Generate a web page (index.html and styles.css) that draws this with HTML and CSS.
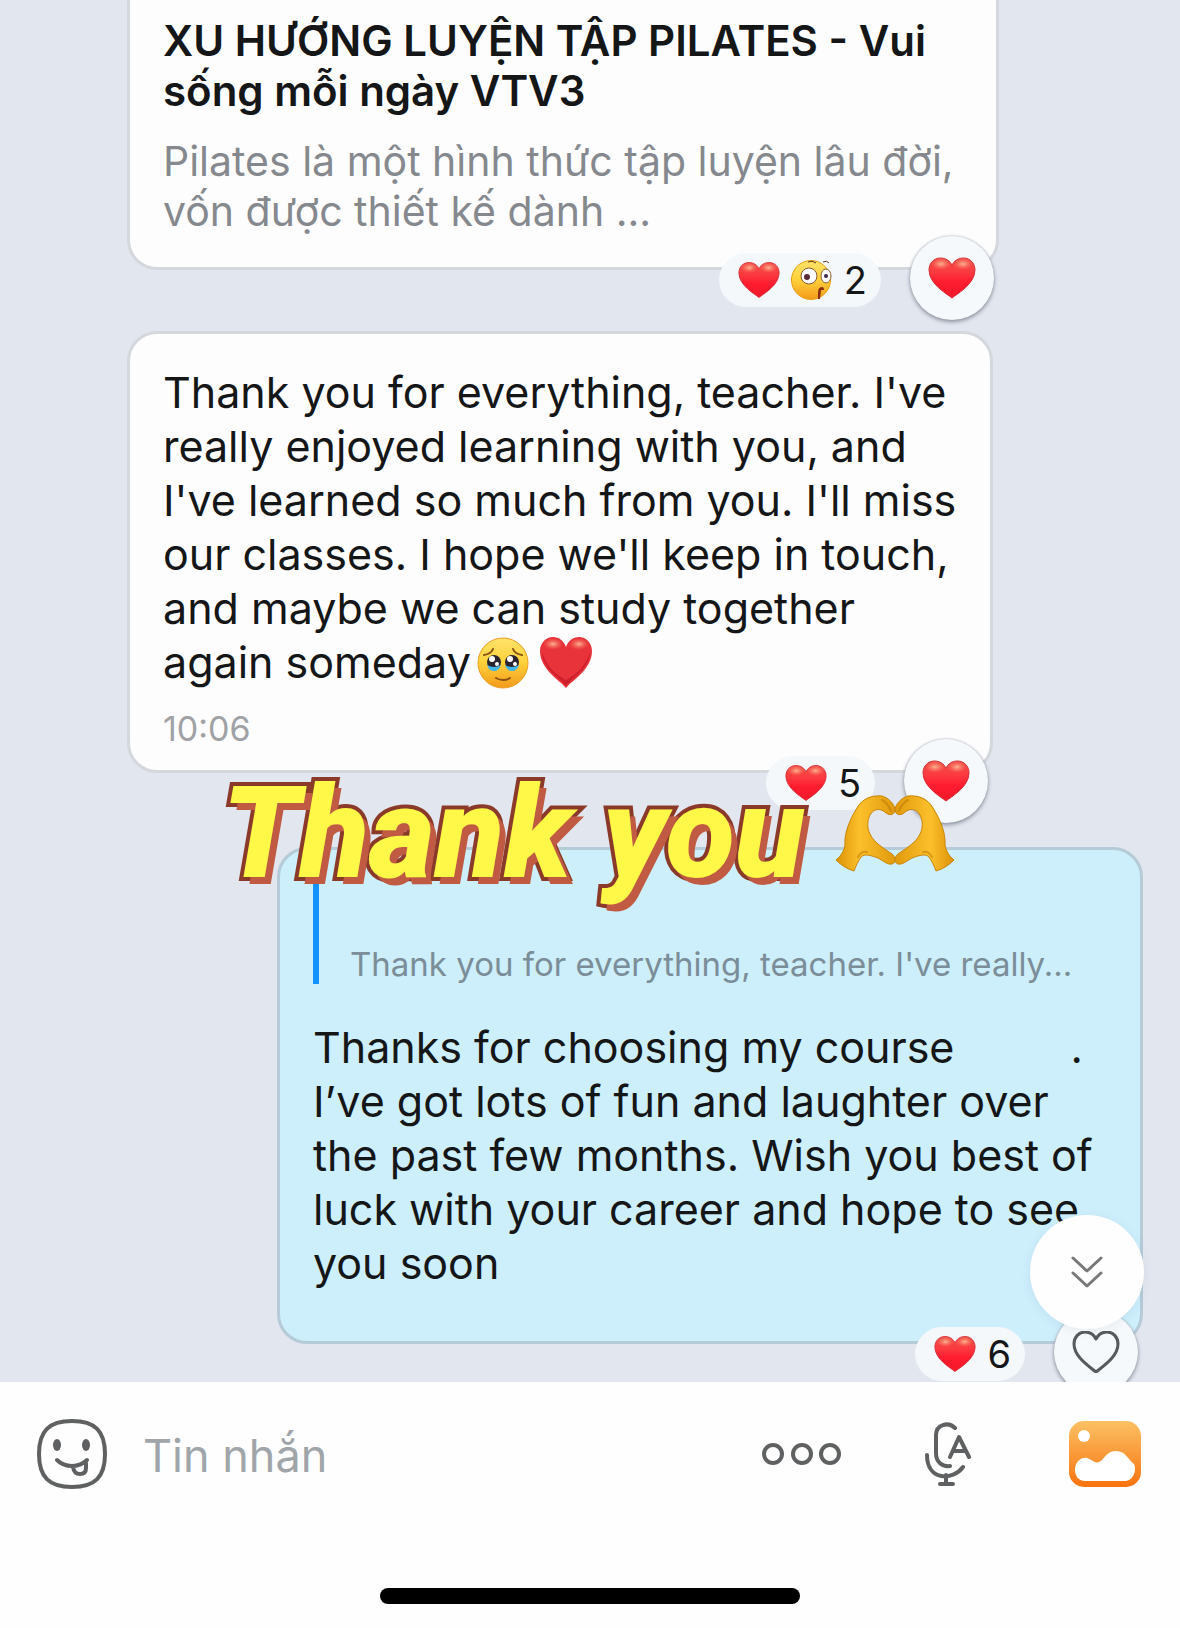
FILE: index.html
```html
<!DOCTYPE html>
<html lang="vi">
<head>
<meta charset="utf-8">
<meta name="viewport" content="width=device-width, initial-scale=1">
<title>Tin nhắn</title>
<link rel="stylesheet" href="styles.css">
</head>
<body>
<svg class="defs" width="0" height="0" aria-hidden="true">
  <defs>
    <linearGradient id="heart-fill" x1="0" y1="0" x2="0" y2="1">
      <stop offset="0" stop-color="#f0504a"/>
      <stop offset=".35" stop-color="#fb3a40"/>
      <stop offset=".6" stop-color="#ff1d30"/>
      <stop offset="1" stop-color="#f2182a"/>
    </linearGradient>
    <radialGradient id="shine"><stop offset="0" stop-color="#ffc9a0" stop-opacity=".85"/><stop offset="1" stop-color="#ff7a60" stop-opacity="0"/></radialGradient>
    <linearGradient id="face-fill" x1="0" y1="0" x2="0" y2="1">
      <stop offset="0" stop-color="#ffe36a"/><stop offset=".5" stop-color="#ffd03a"/><stop offset="1" stop-color="#f39a1c"/>
    </linearGradient>
    <linearGradient id="hand-fill" x1="0" y1="0" x2="1" y2="0">
      <stop offset="0" stop-color="#dc9206"/><stop offset=".4" stop-color="#fcc02c"/><stop offset="1" stop-color="#e09a0c"/>
    </linearGradient>
    <linearGradient id="photo-fill" x1="0" y1="0" x2="0" y2="1">
      <stop offset="0" stop-color="#fbc163"/><stop offset="1" stop-color="#f9730f"/>
    </linearGradient>
    <symbol id="heart" viewBox="0 0 48 42">
      <path d="M24 41C19 37 1 27 1 13 1 6 6 1 12.500 1 18 1 22 4 24 8 26 4 30 1 35.500 1 42 1 47 6 47 13 47 27 29 37 24 41Z" fill="url(#heart-fill)" stroke="#d9303a" stroke-width="1"/>
      <ellipse cx="13" cy="7" rx="10" ry="6" fill="url(#shine)"/>
      <ellipse cx="35" cy="7" rx="10" ry="6" fill="url(#shine)"/>
    </symbol>
    <g id="hand">
      <path d="M0 65C5 61 8 56 9 50C8 38 14 24 21 13C26 4 35 0 46 1C53 3 58 9 59 14C59 20 54 21 50 18C45 13 38 13 34 20C31 26 31 33 34 39C38 48 49 54 56 59C60 62 60 68 56 69C52 70 47 66 42 63C36 61 29 58 25 62C22 66 20 71 18 76C11 74 5 70 0 65Z" fill="url(#hand-fill)" stroke="#c98506" stroke-width="1"/>
      <path d="M46 5C50 7 53 11 55 16M31 57C27 56 24 58 22 62" fill="none" stroke="#b97404" stroke-width="2" stroke-linecap="round" opacity=".5"/>
    </g>
  </defs>
</svg>

<div class="screen">
  <main class="chat">
    <article class="bubble bubble-link">
      <h2 class="link-title">XU HƯỚNG LUYỆN TẬP PILATES - Vui<br>sống mỗi ngày VTV3</h2>
      <p class="link-text">Pilates là một hình thức tập luyện lâu đời,<br>vốn được thiết kế dành ...</p>
      <div class="reactions">
        <button class="pill" type="button">
          <svg class="mini-heart"><use href="#heart"/></svg>
          <svg class="mini-face" viewBox="0 0 42 42">
            <circle cx="20" cy="21" r="19.500" fill="url(#face-fill)" stroke="#e8a013"/>
            <circle cx="18" cy="17" r="8" fill="#fff" stroke="#8a5a32"/>
            <ellipse cx="35" cy="17" rx="5" ry="7" fill="#fff" stroke="#8a5a32"/>
            <circle cx="16" cy="18" r="3" fill="#5a2a38"/><circle cx="35" cy="17" r="2" fill="#3b2450"/>
            <path d="M17 3q4-2 8 1M32 3q4-2 6 1" fill="none" stroke="#5b3a20"/>
            <path d="M27 40V34q0-6 4-6 2 0 2 3h-3l-1 9Z" fill="#8c2a12"/>
          </svg>
          <span>2</span>
        </button>
        <button class="react" type="button" aria-label="Thả tim"><svg class="heart-icon"><use href="#heart"/></svg></button>
      </div>
    </article>

    <article class="bubble bubble-in">
      <p class="text">Thank you for everything, teacher. I've<br>really enjoyed learning with you, and<br>I've learned so much from you. I'll miss<br>our classes. I hope we'll keep in touch,<br>and maybe we can study together<br>again someday<svg class="emoji" viewBox="0 0 52 52">
          <circle cx="26" cy="26" r="25" fill="url(#face-fill)" stroke="#ef9f25"/>
          <circle cx="17" cy="25" r="7" fill="#2a2430"/><circle cx="35" cy="25" r="7" fill="#2a2430"/>
          <path d="M10 28q7 4 14 0-2 6-7 6t-7-6ZM28 28q7 4 14 0-2 6-7 6t-7-6Z" fill="#45b5ec"/>
          <circle cx="15" cy="22" r="3" fill="#fff"/><circle cx="33" cy="22" r="3" fill="#fff"/>
          <circle cx="20" cy="27" r="2" fill="#fff"/><circle cx="38" cy="27" r="2" fill="#fff"/>
          <path d="M7 18q7-1 9-6M36 12q2 5 9 6M19 41q7 4 14 0" fill="none" stroke="#8a5312" stroke-width="2" stroke-linecap="round"/>
        </svg><svg class="emoji emoji-heart" viewBox="0 0 52 52">
          <path d="M26 51C21 44 0 33 0 14 0 6 6 0 13 0 19 0 24 4 26 10 28 4 33 0 39 0 46 0 52 6 52 14 52 33 31 44 26 51Z" fill="#e8333a"/>
          <path d="M26 49C20 41 2 31 2 15 8 34 20 39 26 43 32 39 44 34 50 15 50 31 32 41 26 49Z" fill="#cf1f2c"/>
          <ellipse cx="13" cy="7" rx="10" ry="6" fill="url(#shine)"/><ellipse cx="39" cy="7" rx="10" ry="6" fill="url(#shine)"/>
        </svg></p>
      <time class="time">10:06</time>
      <div class="reactions">
        <button class="pill" type="button"><svg class="mini-heart"><use href="#heart"/></svg><span>5</span></button>
        <button class="react" type="button" aria-label="Thả tim"><svg class="heart-icon"><use href="#heart"/></svg></button>
      </div>
    </article>

    <article class="bubble bubble-out">
      <blockquote class="quote">Thank you for everything, teacher. I've really...</blockquote>
      <p class="text">Thanks for choosing my course<span class="blank"></span>.<br>I’ve got lots of fun and laughter over<br>the past few months. Wish you best of<br>luck with your career and hope to see<br>you soon</p>
      <div class="reactions">
        <button class="pill" type="button"><svg class="mini-heart"><use href="#heart"/></svg><span>6</span></button>
        <button class="react" type="button" aria-label="Thả tim">
          <svg class="heart-icon" viewBox="0 0 48 42"><path d="M24 41C18 36 2 26 2 13 2 6 7 1 13 1 18 1 22 4 24 8 26 4 30 1 35 1 41 1 46 6 46 13 46 26 30 36 24 41Z" fill="none" stroke="#57595b" stroke-width="3" stroke-linejoin="round"/></svg>
        </button>
      </div>
    </article>

    <div class="sticker">
      <span class="sticker-text">Thank you</span>
      <svg class="sticker-hands" viewBox="0 0 118 78"><use href="#hand"/><use href="#hand" transform="translate(118 0) scale(-1 1)"/></svg>
    </div>

    <button class="jump" type="button" aria-label="Xuống cuối">
      <svg width="34" height="34" viewBox="0 0 34 34" fill="none" stroke="#77787a" stroke-width="3" stroke-linecap="round" stroke-linejoin="round"><path d="M3 3l14 13L31 3M3 18l14 13 14-13"/></svg>
    </button>
  </main>

  <footer class="composer">
    <form class="bar">
      <button class="tool" type="button" aria-label="Nhãn dán">
        <svg width="70" height="70" viewBox="0 0 70 70" fill="none" stroke="#5f6061" stroke-width="4" stroke-linecap="round">
          <path d="M35 2C58 2 68 12 68 35S58 68 35 68 2 58 2 35 12 2 35 2Z"/>
          <ellipse cx="20" cy="26" rx="4" ry="6" fill="#5f6061" stroke="none"/><ellipse cx="49" cy="26" rx="4" ry="6" fill="#5f6061" stroke="none"/>
          <path d="M20 41Q26 47 35 47T50 41M36 48Q37 55 43 55T49 49V44"/>
        </svg>
      </button>
      <input class="field" type="text" aria-label="Tin nhắn" placeholder="Tin nhắn">
      <button class="tool" type="button" aria-label="Thêm">
        <svg width="80" height="22" viewBox="0 0 80 22" fill="none" stroke="#5f6061" stroke-width="4"><circle cx="11" cy="11" r="9"/><circle cx="40" cy="11" r="9"/><circle cx="68" cy="11" r="9"/></svg>
      </button>
      <button class="tool tool-mic" type="button" aria-label="Ghi âm">
        <svg width="46" height="66" viewBox="0 0 46 66" fill="none" stroke="#5f6061" stroke-width="4" stroke-linecap="round" stroke-linejoin="round">
          <path d="M30 7C23 0 11 4 11 14V32C11 41 17 46 25 45M2 34C2 60 28 60 38 46M21 54V63M15 63H28M25 36L34 16 44 36M28 30H40"/>
        </svg>
      </button>
      <button class="tool tool-photo" type="button" aria-label="Ảnh">
        <svg width="72" height="66" viewBox="0 0 72 66">
          <rect width="72" height="66" rx="15" fill="url(#photo-fill)"/>
          <circle cx="15" cy="15" r="6" fill="#fff"/>
          <path d="M16 60C9 60 6 54 6 49C6 41 12 36 18 37C23 38 27 45 33 39C38 33 41 30 47 30C57 30 60 40 65 43C68 50 64 60 56 60Z" fill="#fff"/>
        </svg>
      </button>
    </form>
    <div class="home"></div>
  </footer>
</div>
</body>
</html>
```
FILE: styles.css
```css
* { box-sizing: border-box; }

body {
  margin: 0;
  font-family: Inter, "Noto Sans", sans-serif;
  color: #151617;
  background: #fefefe;
}

h2, p, blockquote { margin: 0; }

button {
  padding: 0;
  border: 0;
  background: none;
  font: inherit;
  color: inherit;
}

.defs { position: absolute; }

.screen {
  display: flex;
  flex-direction: column;
  min-height: 100vh;
}

/* Conversation */
.chat {
  position: relative;
  flex: 1;
  display: flex;
  flex-direction: column;
  align-items: flex-start;
  padding: 0 37px 38px 127px;
  overflow: hidden;
  background: #e2e6ef;
}

.bubble {
  position: relative;
  width: 100%;
  max-width: 866px;
  padding: 31px 24px 21px 33px;
  border: 3px solid #d4d7dc;
  border-radius: 30px;
  background: #fdfdfe;
  white-space: nowrap;
}

.bubble-link {
  max-width: 872px;
  padding-top: 16px;
  padding-bottom: 31px;
  border-top: 0;
  border-radius: 0 0 30px 30px;
}

.link-title {
  font-size: 42px;
  line-height: 50px;
  font-weight: 600;
}

.link-text {
  margin-top: 20px;
  font-size: 41px;
  line-height: 50px;
  color: #85898e;
}

.bubble-in { margin-top: 61px; }

.text {
  font-size: 43px;
  line-height: 54px;
}

.emoji {
  width: 52px;
  height: 52px;
  margin: 0 0 0 6px;
  vertical-align: -11px;
}

.emoji-heart { margin-left: 11px; }

.time {
  display: block;
  margin-top: 20px;
  font-size: 34px;
  line-height: 40px;
  color: #a0a2a5;
}

.bubble-out {
  align-self: flex-end;
  margin-top: 74px;
  padding-top: 30px;
  padding-bottom: 51px;
  border-color: #b5cbd8;
  background: #cdeefb;
}

.quote {
  display: flex;
  align-items: flex-end;
  height: 104px;
  margin-bottom: 36px;
  padding-left: 31px;
  border-left: 6px solid #1391ff;
  font-size: 33px;
  line-height: 40px;
  color: #7b8d98;
}

.blank {
  display: inline-block;
  width: 116px;
}

.reactions {
  position: absolute;
  right: 2px;
  bottom: -53px;
  display: flex;
  align-items: flex-end;
  gap: 29px;
}

.pill {
  display: flex;
  align-items: center;
  gap: 11px;
  height: 54px;
  margin-bottom: 13px;
  padding: 0 14px 0 19px;
  border-radius: 27px;
  background: #f5f8fb;
  font-size: 38px;
}

.mini-heart { width: 42px; height: 38px; }
.mini-face { width: 42px; height: 42px; }

.react {
  display: grid;
  place-items: center;
  width: 84px;
  height: 84px;
  border-radius: 50%;
  background: #f6f9fb;
  box-shadow: 0 2px 4px #8a919d, 0 0 2px #b8bcc4;
}

.heart-icon { width: 48px; height: 42px; }

.jump {
  position: absolute;
  right: 36px;
  bottom: 53px;
  display: grid;
  place-items: center;
  width: 114px;
  height: 114px;
  border-radius: 50%;
  background: #fefefe;
  box-shadow: 0 2px 10px #5078901a;
}

/* Decorative caption over the messages */
.sticker {
  position: absolute;
  top: 762px;
  left: 222px;
  display: flex;
  align-items: center;
  gap: 32px;
}

.sticker-text {
  font-family: Roboto, sans-serif;
  font-size: 127px;
  line-height: 144px;
  font-weight: 900;
  font-style: italic;
  color: #fff848;
  -webkit-text-stroke: 8px #8b3a2a;
  paint-order: stroke fill;
  text-shadow: 6px 7px 0 #c05a43;
  white-space: nowrap;
}

.sticker-hands {
  width: 118px;
  height: 78px;
}

/* Message entry */
.composer {
  display: flex;
  flex-direction: column;
  align-items: center;
  justify-content: space-between;
  height: 246px;
  padding-bottom: 24px;
  background: #fefefe;
}

.bar {
  display: flex;
  align-items: center;
  width: 100%;
  height: 144px;
  padding: 0 39px 0 37px;
}

.tool svg { display: block; }

.field {
  flex: 1;
  min-width: 0;
  padding: 4px 36px 0;
  border: 0;
  outline: 0;
  background: none;
  font: 45px/58px Inter, "Noto Sans", sans-serif;
  color: #151617;
}

.field::placeholder { color: #a0a5a9; opacity: 1; }

.tool-mic { margin-left: 83px; }
.tool-photo { margin-left: 98px; }

.home {
  width: 36%;
  max-width: 420px;
  height: 16px;
  border-radius: 8px;
  background: #000;
}
```
